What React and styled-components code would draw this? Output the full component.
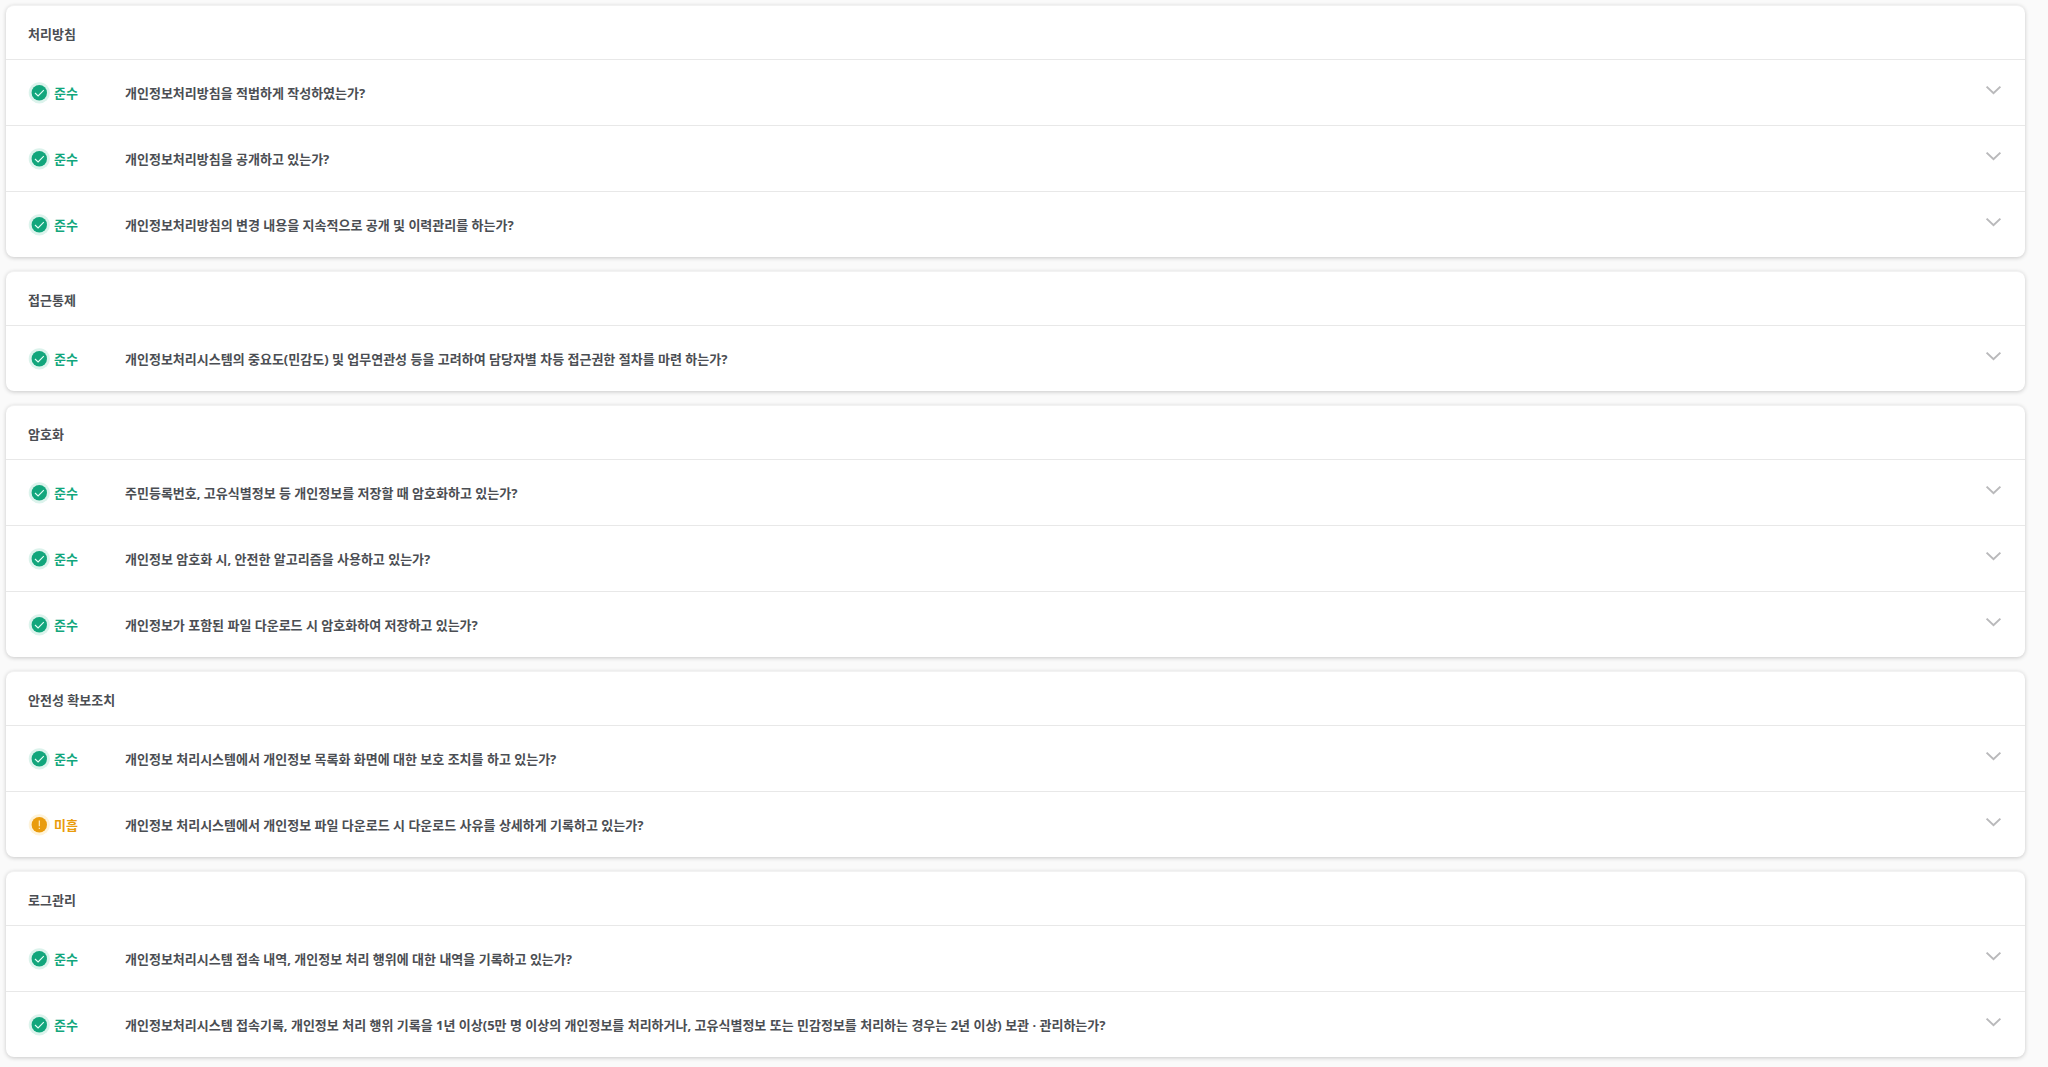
import React, { useState } from "react";
import styled, { createGlobalStyle } from "styled-components";

const GlobalStyle = createGlobalStyle`
  * { box-sizing: border-box; }
  body {
    margin: 0;
    background: #fafafa;
    color: #4b4e53;
    font-family: "Noto Sans", "Noto Sans CJK KR", sans-serif;
    font-size: 13px;
    line-height: 20px;
  }
`;

const Page = styled.main`
  display: flex;
  flex-direction: column;
  gap: 14px;
  padding: 5px 23px 8px 6px;
`;

const Card = styled.section`
  background: #fff;
  border-radius: 8px;
  border-top: 1px solid #f2f2f2;
  box-shadow: 0 1px 4px rgba(0, 0, 0, 0.2);
`;

const CardTitle = styled.h2`
  margin: 0;
  padding: 18px 22px 15px;
  font-size: 13px;
  line-height: 20px;
  font-weight: 700;
`;

const List = styled.ul`
  margin: 0;
  padding: 0;
  list-style: none;
`;

const Item = styled.li`
  border-top: 1px solid #e8e8e8;
`;

const Row = styled.button`
  display: flex;
  align-items: center;
  width: 100%;
  height: 65px;
  padding: 0 22px;
  border: 0;
  background: none;
  color: inherit;
  font: inherit;
  font-weight: 700;
  text-align: left;
  cursor: pointer;
`;

const Status = styled.span`
  display: flex;
  align-items: center;
  gap: 4px;
  width: 97px;
  color: ${(p) => (p.$warn ? "#e99c0c" : "#12a67c")};
`;

const Question = styled.span`
  flex: 1;
`;

const Chevron = styled.svg`
  flex: none;
  margin-bottom: 6px;
  transform: ${(p) => (p.$open ? "rotate(180deg)" : "none")};
`;

const Answer = styled.p`
  margin: 0;
  padding: 0 22px 20px 119px;
`;

function StatusIcon({ warn }) {
  return (
    <svg width="22" height="22" viewBox="0 0 22 22" fill="none" aria-hidden="true">
      <circle cx="11.3" cy="10.8" r="10.6" fill={warn ? "#fef3da" : "#dcf3ec"} />
      <circle cx="11.3" cy="10.8" r="7.7" fill={warn ? "#e99c0c" : "#12a67c"} />
      {warn ? (
        <path d="M11.3 6.6v5.6M11.3 13.8v1.2" stroke="#fff3d0" strokeWidth="1.1" />
      ) : (
        <path d="M7 11l3.1 2.9 5.7-5.8" stroke="#e6fff7" strokeWidth="1.1" />
      )}
    </svg>
  );
}

const sections = [
  {
    title: "처리방침",
    items: [
      { text: "개인정보처리방침을 적법하게 작성하였는가?" },
      { text: "개인정보처리방침을 공개하고 있는가?" },
      { text: "개인정보처리방침의 변경 내용을 지속적으로 공개 및 이력관리를 하는가?" },
    ],
  },
  {
    title: "접근통제",
    items: [
      { text: "개인정보처리시스템의 중요도(민감도) 및 업무연관성 등을 고려하여 담당자별 차등 접근권한 절차를 마련 하는가?" },
    ],
  },
  {
    title: "암호화",
    items: [
      { text: "주민등록번호, 고유식별정보 등 개인정보를 저장할 때 암호화하고 있는가?" },
      { text: "개인정보 암호화 시, 안전한 알고리즘을 사용하고 있는가?" },
      { text: "개인정보가 포함된 파일 다운로드 시 암호화하여 저장하고 있는가?" },
    ],
  },
  {
    title: "안전성 확보조치",
    items: [
      { text: "개인정보 처리시스템에서 개인정보 목록화 화면에 대한 보호 조치를 하고 있는가?" },
      { text: "개인정보 처리시스템에서 개인정보 파일 다운로드 시 다운로드 사유를 상세하게 기록하고 있는가?", warn: true },
    ],
  },
  {
    title: "로그관리",
    items: [
      { text: "개인정보처리시스템 접속 내역, 개인정보 처리 행위에 대한 내역을 기록하고 있는가?" },
      { text: "개인정보처리시스템 접속기록, 개인정보 처리 행위 기록을 1년 이상(5만 명 이상의 개인정보를 처리하거나, 고유식별정보 또는 민감정보를 처리하는 경우는 2년 이상) 보관 · 관리하는가?" },
    ],
  },
];

function CheckItem({ text, warn }) {
  const [open, setOpen] = useState(false);
  return (
    <Item>
      <Row type="button" aria-expanded={open} onClick={() => setOpen(!open)}>
        <Status $warn={warn}>
          <StatusIcon warn={warn} />
          {warn ? "미흡" : "준수"}
        </Status>
        <Question>{text}</Question>
        <Chevron $open={open} width="20" height="20" viewBox="0 0 20 20" fill="none" aria-hidden="true">
          <path d="M3.6 6.6l6.9 6.6 6.9-6.6" stroke="#b9b9bb" strokeWidth="2" />
        </Chevron>
      </Row>
      {open && <Answer>{warn ? "미흡" : "준수"}</Answer>}
    </Item>
  );
}

export default function App() {
  return (
    <>
      <GlobalStyle />
      <Page>
        {sections.map((s) => (
          <Card key={s.title}>
            <CardTitle>{s.title}</CardTitle>
            <List>
              {s.items.map((item) => (
                <CheckItem key={item.text} {...item} />
              ))}
            </List>
          </Card>
        ))}
      </Page>
    </>
  );
}
